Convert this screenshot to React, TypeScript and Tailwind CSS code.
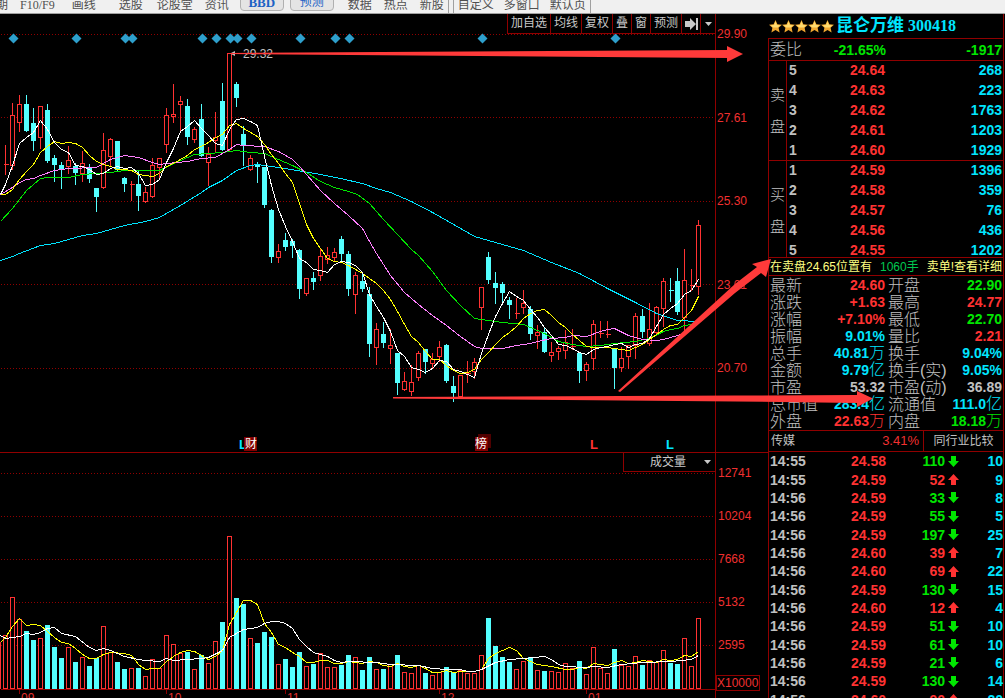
type Candle = [dir: "u" | "d", high: number, top: number, bottom: number, low: number, vol: number];

// y positions inside the window: high, body top, body bottom, low, volume top
const CANDLES: Candle[] = [
  ["u", 144, 164, 164, 173, 635], ["u", 102, 115, 165, 168, 597], ["u", 94, 104, 122, 130, 619],
  ["d", 94, 104, 130, 130, 631], ["d", 107, 123, 140, 149, 640], ["u", 105, 106, 137, 147, 638],
  ["d", 103, 110, 160, 161, 625], ["d", 154, 158, 164, 180, 647], ["d", 161, 165, 169, 187, 658],
  ["u", 145, 160, 166, 172, 647], ["d", 162, 166, 172, 183, 662], ["u", 150, 163, 173, 180, 657],
  ["d", 163, 167, 178, 181, 666], ["d", 187, 188, 196, 210, 658], ["u", 132, 150, 187, 187, 626],
  ["u", 137, 139, 156, 164, 652], ["d", 141, 141, 169, 169, 662], ["d", 176, 178, 183, 190, 669],
  ["u", 180, 184, 184, 199, 668], ["d", 170, 184, 195, 209, 668], ["u", 186, 192, 201, 201, 676],
  ["u", 157, 165, 196, 196, 659], ["u", 158, 158, 167, 176, 668], ["u", 107, 115, 144, 151, 635],
  ["u", 83, 114, 116, 121, 644], ["u", 95, 101, 104, 130, 653], ["d", 98, 106, 136, 143, 652],
  ["u", 126, 129, 139, 141, 669], ["d", 103, 119, 155, 155, 655], ["u", 146, 154, 162, 184, 663],
  ["u", 111, 137, 140, 151, 641], ["d", 82, 101, 149, 149, 622], ["u", 53, 53, 149, 149, 536],
  ["d", 81, 84, 97, 105, 598], ["d", 125, 134, 145, 164, 604], ["u", 154, 158, 169, 169, 638],
  ["d", 161, 164, 166, 181, 643], ["d", 167, 167, 204, 206, 632], ["d", 208, 210, 256, 261, 637],
  ["u", 243, 251, 257, 261, 664], ["d", 232, 240, 246, 249, 659], ["d", 238, 241, 245, 256, 667],
  ["d", 248, 250, 288, 297, 652], ["u", 277, 278, 293, 294, 666], ["d", 271, 278, 281, 288, 664],
  ["u", 247, 256, 275, 279, 653], ["u", 246, 255, 259, 262, 667], ["u", 247, 252, 257, 260, 667],
  ["d", 235, 239, 253, 261, 665], ["d", 250, 254, 288, 294, 655], ["u", 271, 275, 294, 312, 657],
  ["d", 271, 281, 288, 290, 670], ["d", 286, 294, 343, 355, 657], ["u", 322, 329, 347, 363, 669],
  ["d", 321, 334, 342, 346, 669], ["u", 328, 345, 348, 362, 664], ["d", 352, 353, 382, 393, 655],
  ["u", 371, 381, 389, 389, 672], ["u", 364, 382, 391, 394, 673], ["u", 350, 353, 377, 379, 665],
  ["d", 349, 349, 361, 372, 673], ["u", 352, 359, 363, 366, 675], ["u", 340, 347, 356, 360, 672],
  ["d", 343, 345, 380, 381, 667], ["d", 375, 386, 392, 400, 672], ["u", 374, 375, 396, 397, 670],
  ["u", 360, 373, 373, 381, 673], ["u", 357, 362, 371, 377, 673], ["u", 287, 287, 307, 328, 655],
  ["d", 251, 257, 279, 282, 618], ["d", 271, 283, 287, 302, 646], ["d", 281, 284, 292, 302, 657],
  ["d", 296, 300, 304, 317, 662], ["u", 297, 313, 313, 317, 669], ["u", 289, 303, 307, 312, 661],
  ["d", 305, 309, 333, 338, 657], ["u", 324, 332, 335, 347, 670], ["d", 327, 332, 351, 351, 671],
  ["u", 341, 352, 355, 360, 671], ["u", 345, 348, 351, 358, 672], ["u", 329, 342, 350, 357, 663],
  ["u", 328, 346, 346, 348, 668], ["d", 352, 353, 370, 381, 661], ["u", 361, 364, 370, 379, 674],
  ["u", 319, 324, 358, 368, 647], ["u", 320, 333, 333, 336, 668], ["u", 320, 334, 334, 336, 673],
  ["d", 347, 348, 367, 387, 649], ["u", 346, 358, 367, 370, 665], ["u", 344, 345, 356, 367, 666],
  ["u", 312, 316, 345, 357, 656], ["d", 308, 316, 331, 336, 665], ["u", 302, 329, 343, 344, 660],
  ["u", 305, 307, 332, 333, 662], ["u", 277, 281, 308, 325, 650], ["d", 277, 290, 290, 300, 663],
  ["d", 267, 281, 311, 313, 664], ["u", 248, 280, 317, 330, 638], ["u", 268, 285, 285, 289, 666],
  ["u", 219, 225, 286, 293, 618],
];

const PRICE_LINES = [
  { color: "#00e5ff", points: "0,260 12,256 19,253 40,245 54,243 68,239 82,235 96,233 110,229 124,225 145,221 159,217 180,205 201,192 208,187 222,180 236,170 250,165 257,164 278,167 320,174 340,178 362,183 376,188 390,192 411,201 432,212 455,225 474,236 495,242 523,250 551,262 579,273 607,288 635,302 656,313 677,320 698,321" },
  { color: "#00e600", points: "0,221 12,208 26,190 40,178 47,177 68,177 82,174 110,172 124,170 159,170 173,163 194,154 208,153 222,152 236,150 250,152 264,153 278,159 292,165 306,172 320,181 334,187 348,191 357,194 369,203 383,219 397,234 411,249 418,255 432,271 446,290 460,305 474,318 481,319 502,322 523,324 530,327 544,333 558,341 572,344 586,346 600,345 614,343 635,341 649,338 663,331 670,329 677,328 684,325 698,323" },
  { color: "#ff80ff", points: "0,194 12,187 19,182 26,179 33,178 40,175 54,170 68,168 96,167 110,159 124,155 138,157 152,162 159,164 166,163 187,161 201,158 215,157 229,149 236,144 243,145 264,146 278,151 292,159 299,166 306,174 320,190 334,203 348,215 362,228 369,241 376,253 390,275 404,292 418,304 432,315 446,325 460,336 474,346 481,348 502,348 516,345 530,343 537,341 551,338 565,337 572,335 586,336 600,331 607,329 614,328 628,335 642,339 656,340 663,339 670,337 684,333" },
  { color: "#ffff00", points: "0,194 5,194 12,189 19,179 26,171 33,164 40,152 47,146 54,141 61,143 68,142 75,143 82,147 89,155 96,161 103,164 110,166 117,169 124,169 131,170 138,174 145,175 152,176 159,173 166,166 173,163 180,159 187,155 194,149 201,146 208,142 215,137 222,134 229,125 236,123 243,128 250,132 257,136 264,144 271,154 278,163 285,173 292,182 299,203 306,224 313,238 320,248 327,258 334,261 341,262 348,265 355,269 362,273 369,278 376,283 383,290 390,299 397,311 404,324 411,336 418,342 425,351 432,359 439,359 446,365 453,370 460,373 467,372 474,369 481,359 488,352 495,344 502,337 509,332 516,326 523,318 530,313 537,310 544,309 551,315 558,322 565,327 572,334 579,340 586,346 593,347 607,347 614,348 628,350 635,347 642,344 649,339 656,334 663,329 670,325 677,324 684,317 691,310 698,296" },
  { color: "#ffffff", points: "0,194 5,184 12,165 19,143 26,137 33,132 40,120 47,129 54,142 61,149 68,152 75,165 82,166 89,169 96,174 103,173 110,168 117,166 124,168 131,167 138,173 145,185 152,184 159,179 166,162 173,148 180,131 187,126 194,120 201,128 208,135 215,143 222,145 229,129 236,119 243,118 250,121 257,125 264,156 271,185 278,209 285,226 292,241 299,258 306,262 313,269 320,270 327,272 334,264 341,261 348,262 355,265 362,272 369,294 376,306 383,317 390,331 397,350 404,356 411,367 418,369 425,372 432,368 439,360 446,361 453,369 460,371 467,374 474,377 481,353 488,334 495,316 502,303 509,291 516,296 523,300 530,309 537,317 544,327 551,335 558,344 565,345 572,348 579,352 586,354 593,349 600,347 607,346 614,344 621,343 628,347 635,344 642,343 649,338 656,326 663,314 670,308 677,303 684,294 691,290 698,279" },
];

const VOLUME_LINES = [
  { color: "#ffff00", points: "0,642 5,637 12,626 19,618 26,625 33,624 40,625 47,631 54,637 61,642 68,643 75,648 82,654 89,658 96,658 103,654 110,652 124,653 131,655 138,664 145,669 152,668 159,668 166,661 173,656 180,652 187,650 194,651 201,655 208,659 215,656 222,650 229,624 236,612 243,600 250,600 257,604 264,623 271,632 278,644 285,647 292,652 299,656 306,662 313,662 320,660 327,660 334,663 341,663 348,661 362,663 369,661 376,662 383,665 390,666 397,663 404,666 411,667 418,665 425,668 432,672 439,672 446,670 453,672 460,671 474,671 481,669 488,658 495,653 502,650 509,647 516,650 523,658 530,661 537,664 551,666 565,669 572,669 579,667 586,668 593,663 600,664 607,665 614,662 621,660 628,663 635,662 642,660 656,662 663,659 670,660 677,659 684,655 691,656 698,651" },
  { color: "#ffffff", points: "0,635 5,638 19,636 26,633 33,634 40,632 47,628 54,627 61,633 75,636 89,647 96,650 103,648 110,650 124,656 138,659 145,660 159,661 166,658 173,660 201,658 208,657 222,650 229,637 236,633 243,629 257,627 264,623 271,621 278,621 285,623 292,628 299,639 306,646 313,652 327,656 334,660 341,662 348,661 376,662 390,664 418,665 432,668 446,669 460,669 467,671 474,671 481,669 495,662 509,659 523,658 544,656 551,659 558,664 565,666 586,667 593,666 607,667 621,664 642,662 670,661 691,659 698,655" },
];

const PRICE_TICKS = ["29.90", "27.61", "25.30", "23.01", "20.70"];
const PRICE_GRID = [34, 117, 201, 284, 368];
const VOLUME_TICKS = ["12741", "10204", "7668", "5132", "2595"];
const VOLUME_GRID = [473, 516, 559, 602, 645];
const DIAMONDS = [13, 76, 125, 132, 202, 216, 230, 237, 251, 300, 335, 349, 482, 615];
const MONTHS = [
  { x: 19, label: "09" },
  { x: 166, label: "10" },
  { x: 285, label: "11" },
  { x: 439, label: "12" },
  { x: 586, label: "01" },
];

const MENU_LEFT = [
  { label: "F10/F9", cls: "ml-3 font-['Liberation_Serif']" },
  { label: "画线", cls: "ml-[17px]" },
  { label: "选股", cls: "ml-[23px]" },
  { label: "论股堂", cls: "ml-[14px]" },
  { label: "资讯", cls: "ml-3" },
];
const MENU_MID = ["数据", "热点", "新股"];
const MENU_RIGHT = ["自定义", "多窗口", "默认页"];
const CHART_TOOLS = ["加自选", "均线", "复权", "叠", "窗", "预测"];

const ASKS = [
  ["5", "24.64", "268"], ["4", "24.63", "223"], ["3", "24.62", "1763"], ["2", "24.61", "1203"], ["1", "24.60", "1929"],
];
const BIDS = [
  ["1", "24.59", "1396"], ["2", "24.58", "359"], ["3", "24.57", "76"], ["4", "24.56", "436"], ["5", "24.55", "1202"],
];

const RED = "text-[#ff3232]";
const GREEN = "text-[#00e600]";
const CYAN = "text-[#00e5ff]";
const GREY = "text-[#c0c0c0]";

const QUOTES = [
  ["最新", "24.60", RED, "开盘", "22.90", GREEN],
  ["涨跌", "+1.63", RED, "最高", "24.77", RED],
  ["涨幅", "+7.10%", RED, "最低", "22.70", GREEN],
  ["振幅", "9.01%", CYAN, "量比", "2.21", RED],
  ["总手", "40.81万", CYAN, "换手", "9.04%", CYAN],
  ["金额", "9.79亿", CYAN, "换手(实)", "9.05%", CYAN],
  ["市盈", "53.32", GREY, "市盈(动)", "36.89", GREY],
  ["总市值", "283.4亿", CYAN, "流通值", "111.0亿", CYAN],
  ["外盘", "22.63万", RED, "内盘", "18.18万", GREEN],
];

const TRADES = [
  ["14:55", "24.58", "110", "d", "10"],
  ["14:55", "24.59", "52", "u", "9"],
  ["14:56", "24.59", "33", "d", "8"],
  ["14:56", "24.59", "55", "d", "5"],
  ["14:56", "24.59", "197", "d", "25"],
  ["14:56", "24.60", "39", "u", "7"],
  ["14:56", "24.60", "69", "u", "22"],
  ["14:56", "24.59", "130", "d", "15"],
  ["14:56", "24.60", "12", "u", "4"],
  ["14:56", "24.59", "51", "d", "10"],
  ["14:56", "24.59", "61", "d", "10"],
  ["14:56", "24.59", "21", "d", "6"],
  ["14:56", "24.59", "130", "d", "14"],
  ["14:56", "24.60", "90", "u", "20"],
];

function Toolbar() {
  return (
    <nav className="flex h-[14px] shrink-0 items-end overflow-hidden whitespace-nowrap border-b border-[#a0a0a0] bg-[#f0f0f0] text-[12px] leading-[15px] text-[#505050]">
      <button className="-ml-1">期</button>
      {MENU_LEFT.map((m) => (
        <button key={m.label} className={m.cls}>{m.label}</button>
      ))}
      <button className="ml-[11px] mb-[2px] h-[18px] w-11 rounded-sm border border-[#b0b0b0] bg-[#e4e4e4] font-['Liberation_Serif'] text-[13px] font-bold text-[#1c62c4]">BBD</button>
      <button className="ml-[6px] mb-[2px] h-[18px] w-11 rounded-sm border border-[#b0b0b0] bg-[#e4e4e4] text-[#1c62c4]">预测</button>
      <div className="ml-[14px] flex gap-3 border-r border-[#a0a0a0] pr-1">
        {MENU_MID.map((m) => <button key={m}>{m}</button>)}
      </div>
      <div className="ml-1 flex gap-[10px] border-x border-[#a0a0a0] px-1">
        {MENU_RIGHT.map((m) => <button key={m}>{m}</button>)}
      </div>
    </nav>
  );
}

function GridLines({ ys }: { ys: number[] }) {
  return (
    <>
      {ys.map((y) => (
        <line key={y} x1={0} x2={715} y1={y} y2={y} stroke="#900000" strokeDasharray="1 2" />
      ))}
    </>
  );
}

function PriceChart() {
  return (
    <svg viewBox="0 14 715 438" className="block h-auto w-full">
      <g transform="translate(0.5 0.5)" shapeRendering="crispEdges" fill="none">
        <GridLines ys={PRICE_GRID} />
        {CANDLES.map(([dir, high, top, bottom, low], i) => {
          const x = 5 + i * 7;
          const color = dir === "u" ? "#ff3232" : "#54ffff";
          return (
            <g key={i} stroke={color}>
              <path d={`M${x} ${high}V${top}M${x} ${bottom}V${low + 1}`} />
              {top === bottom ? (
                <path d={`M${x - 2} ${top}H${x + 3}`} />
              ) : (
                <rect x={x - 2} y={top} width={4} height={bottom - top} fill={dir === "u" ? "#000" : color} />
              )}
            </g>
          );
        })}
        {PRICE_LINES.map((l) => (
          <polyline key={l.color} points={l.points} stroke={l.color} />
        ))}
      </g>
      {DIAMONDS.map((x) => (
        <path key={x} d={`M${x + 0.5} 33.5l5 5-5 5-5-5z`} fill="#2e9fcc" />
      ))}
      <path d="M230 53.5l5-2.5v2h7v1h-7v2z" fill="#c0c0c0" />
      <text x={243} y={58} fontSize={12} fill="#c0c0c0">29.32</text>
      <text x={239} y={449} fontSize={13} fontWeight="bold" fill="#00e5ff">L</text>
      <rect x={244} y={437} width={13} height={14} fill="#800000" />
      <text x={245} y={448} fontSize={12} fill="#fff">财</text>
      <rect x={478} y={434} width={13} height={14} fill="#500000" />
      <rect x={475} y={437} width={13} height={14} fill="#800000" />
      <text x={475} y={448} fontSize={12} fill="#fff">榜</text>
      <text x={590} y={449} fontSize={13} fontWeight="bold" fill="#ff3232">L</text>
      <text x={666} y={449} fontSize={13} fontWeight="bold" fill="#00e5ff">L</text>
    </svg>
  );
}

function VolumeChart() {
  return (
    <svg viewBox="0 453 715 245" className="block h-auto w-full">
      <g transform="translate(0.5 0.5)" shapeRendering="crispEdges" fill="none">
        <GridLines ys={VOLUME_GRID} />
        <rect x={-4} y={642} width={4} height={46} stroke="#ff3232" />
        {CANDLES.map(([dir, , , , , top], i) => (
          <rect
            key={i}
            x={3 + i * 7}
            y={top}
            width={4}
            height={688 - top}
            stroke={dir === "u" ? "#ff3232" : "#54ffff"}
            fill={dir === "u" ? "#000" : "#54ffff"}
          />
        ))}
        {VOLUME_LINES.map((l) => (
          <polyline key={l.color} points={l.points} stroke={l.color} />
        ))}
        <path d="M0 689H715" stroke="#900000" />
        {MONTHS.map((m) => <path key={m.x} d={`M${m.x} 689v4`} stroke="#900000" />)}
      </g>
      {MONTHS.map((m) => (
        <text key={m.x} x={m.x + 2} y={702} fontSize={12} fill="#e03030">{m.label}</text>
      ))}
    </svg>
  );
}

function Axis({ ticks, cls }: { ticks: string[]; cls: string }) {
  return (
    <div className={`flex flex-col justify-between text-[12px] leading-4 text-[#f03030] ${cls}`}>
      {ticks.map((t) => <span key={t}>{t}</span>)}
    </div>
  );
}

function ChartPanel() {
  return (
    <main className="min-w-0 flex-1">
      <section className="flex border-b border-[#900000]">
        <div className="relative min-w-0 flex-1">
          <PriceChart />
          <div className="absolute top-0 right-0 flex h-5 border-b border-l border-[#900000] bg-black text-[12px] leading-[19px] text-[#c8c8c8]">
            {CHART_TOOLS.map((t) => (
              <button key={t} className="border-r border-[#900000] px-[3px]">{t}</button>
            ))}
            <button aria-label="移到最后" className="flex w-[19px] items-center justify-center border-r border-[#900000]">
              <svg width="13" height="12" viewBox="0 0 13 12" fill="#c8c8c8">
                <path d="M0 3h5V0l6 6-6 6V9H0zM11 0h2v12h-2z" />
              </svg>
            </button>
            <button aria-label="更多" className="flex w-[14px] items-center justify-center">
              <svg width="7" height="4" viewBox="0 0 7 4" fill="#c8c8c8"><path d="M0 0h7L3.5 4z" /></svg>
            </button>
          </div>
        </div>
        <div className="w-[53px] border-l border-[#900000] pt-3 pl-px">
          <Axis ticks={PRICE_TICKS} cls="h-[350px]" />
        </div>
      </section>
      <section className="flex">
        <div className="relative min-w-0 flex-1">
          <VolumeChart />
          <div className="absolute top-0 right-0 flex h-[19px] w-[92px] items-center border-b border-l border-[#900000] bg-black">
            <select aria-label="指标" className="w-full appearance-none bg-transparent pl-[26px] text-[12px] leading-4 text-[#c8c8c8]">
              <option>成交量</option>
            </select>
            <svg className="absolute right-1" width="7" height="4" viewBox="0 0 7 4" fill="#c8c8c8"><path d="M0 0h7L3.5 4z" /></svg>
          </div>
        </div>
        <div className="w-[53px] border-l border-[#900000] pt-3">
          <Axis ticks={VOLUME_TICKS} cls="h-[188px] pl-[2px]" />
          <div className="mt-[22px] w-11 border border-[#900000] text-[12px] leading-[14px] text-[#f03030]">X10000</div>
        </div>
      </section>
    </main>
  );
}

function Star() {
  return (
    <svg width="13" height="13" viewBox="0 0 13 13">
      <path d="M6.5 0l1.9 4.2 4.6.5-3.4 3.1 1 4.7-4.1-2.4-4.1 2.4 1-4.7L0 4.7l4.6-.5z" fill="#f0a830" />
      <path d="M6.5 1.5l1.4 3.4 3.5.3-2.6 2.3H4.2L1.6 5.2l3.5-.3z" fill="#ffdc70" />
    </svg>
  );
}

function DepthBlock({ title, rows, cls }: { title: string; rows: string[][]; cls: string }) {
  return (
    <section className={`flex border-b border-[#900000] ${cls}`}>
      <div className="flex w-[18px] flex-col items-center gap-4 border-r border-[#900000] pt-[26px] text-[15px] leading-4 font-light text-[#c0c0c0]">
        {title.split("").map((c) => <span key={c}>{c}</span>)}
      </div>
      <table className="h-[100px] flex-1 text-[14px] leading-[18px] font-bold">
        <tbody>
          {rows.map(([level, price, qty]) => (
            <tr key={level} className="h-5 align-top">
              <td className="w-6 pl-[2px] text-[#c0c0c0]">{level}</td>
              <td className="w-[74px] text-right text-[#ff3232]">{price}</td>
              <td className="pr-px text-right text-[#00e5ff]">{qty}</td>
            </tr>
          ))}
        </tbody>
      </table>
    </section>
  );
}

// 万 / 亿 are set lighter and larger than the digits before them
function Amount({ value }: { value: string }) {
  const unit = /[万亿]$/.test(value) ? value.slice(-1) : "";
  return (
    <>
      {unit ? value.slice(0, -1) : value}
      {unit && <span className="text-[16px] leading-3 font-light">{unit}</span>}
    </>
  );
}

function TradeArrow({ up }: { up: boolean }) {
  return (
    <svg width="11" height="11" viewBox="0 0 11 11" fill="currentColor">
      <path d={up ? "M5.5 0L11 6H8v5H3V6H0z" : "M5.5 11L11 5H8V0H3v5H0z"} />
    </svg>
  );
}

function QuotePanel() {
  return (
    <aside className="mr-px w-[236px] shrink-0 border-r border-[#900000] whitespace-nowrap">
      <header className="flex h-6 items-center text-[#00e5ff]">
        <div className="flex pl-px">
          {[0, 1, 2, 3, 4].map((i) => <Star key={i} />)}
        </div>
        <h1 className="ml-[2px] text-[17px] leading-6 font-bold">昆仑万维</h1>
        <span className="ml-1 font-['Liberation_Serif'] text-[16px] font-bold">300418</span>
      </header>
      <div className="border-t border-l border-[#900000]">
        <div className="flex h-[22px] items-center border-b border-[#900000] pt-px pr-px pl-px text-[14px] font-bold text-[#00e600]">
          <span className="text-[16px] font-light text-[#c0c0c0]">委比</span>
          <span className="w-[84px] text-right">-21.65%</span>
          <span className="flex-1 text-right">-1917</span>
        </div>
        <DepthBlock title="卖盘" rows={ASKS} cls="h-[100px]" />
        <DepthBlock title="买盘" rows={BIDS} cls="h-[97px]" />
        <button className="flex h-[18px] w-full items-center justify-between border-b border-[#900000] px-px text-[12px] text-[#ffff80]">
          <span>在卖盘24.65位置有</span>
          <span className="text-[#00c850]">1060手</span>
          <span>卖单!查看详细</span>
        </button>
        <table className="mt-px w-full table-fixed text-[14px] leading-[17px]">
          <tbody>
            {QUOTES.map(([l1, v1, c1, l2, v2, c2]) => (
              <tr key={l1} className="h-[17px]">
                <td className="w-[50px] pl-px text-[16px] leading-[17px] font-light text-[#c0c0c0]">{l1}</td>
                <td className={`w-[66px] text-right leading-[17px] font-bold ${c1}`}><Amount value={v1} /></td>
                <td className="w-[60px] pl-[3px] text-[16px] leading-[17px] font-light text-[#c0c0c0]">{l2}</td>
                <td className={`pr-px text-right leading-[17px] font-bold ${c2}`}><Amount value={v2} /></td>
              </tr>
            ))}
          </tbody>
        </table>
        <div className="flex h-[22px] items-stretch border-y border-[#900000] text-[12px] leading-5 text-[#c0c0c0]">
          <span className="pl-[2px]">传媒</span>
          <span className="flex-1 pr-1 text-right text-[13px] text-[#f03030]">3.41%</span>
          <button className="w-20 border-l border-[#900000]">同行业比较</button>
        </div>
        <table className="h-[257px] w-full table-fixed text-[14px] leading-[18px] font-bold">
          <tbody>
            {TRADES.map(([time, price, qty, dir, count], i) => (
              <tr key={i}>
                <td className="w-[50px] pl-px text-[#c0c0c0]">{time}</td>
                <td className="w-[67px] text-right text-[#ff3232]">{price}</td>
                <td className={`w-[59px] text-right ${dir === "u" ? RED : GREEN}`}>{qty}</td>
                <td className={`w-5 pl-[3px] ${dir === "u" ? RED : GREEN}`}>
                  <TradeArrow up={dir === "u"} />
                </td>
                <td className="text-right text-[#00e5ff]">{count}</td>
              </tr>
            ))}
          </tbody>
        </table>
      </div>
    </aside>
  );
}

// hand-drawn pointers that run across both panels
function Pointers() {
  return (
    <svg viewBox="0 0 1005 698" className="pointer-events-none absolute top-0 left-0 h-auto w-full" fill="#ff3a3a">
      <path d="M230 53L727 50V46L743 54L727 62V58L230 54z" />
      <path d="M393 397L735 395.5L857 395V391L873 398.500L857 407V403L735 401.500L393 398.500z" />
      <path d="M618 391L735 284L757 267L752 264L771 259L766 277L761 273L735 293L620 392z" />
    </svg>
  );
}

export default function App() {
  return (
    <div className="relative flex h-screen flex-col overflow-hidden bg-black font-['Liberation_Sans','Noto_Sans_CJK_SC',sans-serif]">
      <Toolbar />
      <div className="flex min-h-0 flex-1 overflow-hidden">
        <ChartPanel />
        <QuotePanel />
      </div>
      <Pointers />
    </div>
  );
}
